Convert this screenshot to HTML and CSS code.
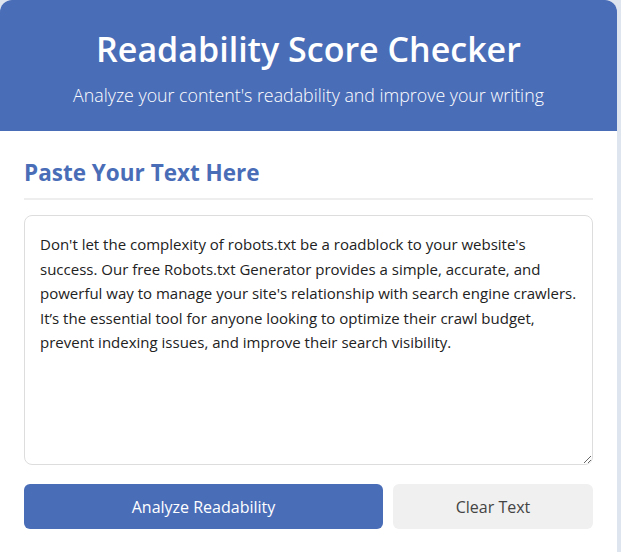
FILE: index.html
```html
<!DOCTYPE html>
<html lang="en">
<head>
<meta charset="utf-8">
<title>Readability Score Checker</title>
<link rel="stylesheet" href="styles.css">
</head>
<body>
<div class="card">
  <header class="hero">
    <h1 class="hero-title">Readability Score Checker</h1>
    <p class="hero-sub">Analyze your content's readability and improve your writing</p>
  </header>
  <section class="input-section">
    <h2 class="section-title">Paste Your Text Here</h2>
    <textarea class="text-input">Don't let the complexity of robots.txt be a roadblock to your website's success. Our free Robots.txt Generator provides a simple, accurate, and powerful way to manage your site's relationship with search engine crawlers. It’s the essential tool for anyone looking to optimize their crawl budget, prevent indexing issues, and improve their search visibility.</textarea>
    <div class="actions">
      <button class="btn btn-primary">Analyze Readability</button>
      <button class="btn btn-secondary">Clear Text</button>
    </div>
  </section>
</div>
</body>
</html>
```

FILE: styles.css
```css
* { box-sizing: border-box; }
html, body { margin: 0; padding: 0; }
body {
  background: #dfe5ef;
  font-family: "Open Sans", "Noto Sans", sans-serif;
}
.card {
  width: 617px;
  min-height: 552px;
  background: #ffffff;
  border-radius: 12px 12px 0 0;
  overflow: hidden;
}
.hero {
  background: #4a6db8;
  color: #ffffff;
  height: 131px;
  padding-top: 26px;
  text-align: center;
}
.hero-title {
  margin: 0;
  font-size: 34px;
  font-weight: 600;
  line-height: 46px;
}
.hero-sub {
  margin: 11px 0 0;
  font-size: 17.8px;
  font-weight: 300;
  line-height: 24px;
}
.input-section {
  padding: 27px 24px 0;
}
.section-title {
  margin: 0;
  color: #4a6db8;
  font-size: 22.5px;
  font-weight: 700;
  line-height: 30px;
  padding-bottom: 10px;
  border-bottom: 2px solid #eeeeee;
}
.text-input {
  display: block;
  width: 100%;
  height: 250px;
  margin-top: 15px;
  padding: 16px 15px;
  border: 1px solid #dddddd;
  border-radius: 8px;
  font-family: "Open Sans", "Noto Sans", sans-serif;
  font-size: 15px;
  line-height: 24.5px;
  color: #222222;
  resize: vertical;
}
.actions {
  display: grid;
  grid-template-columns: 1fr 200px;
  gap: 10px;
  margin-top: 19px;
}
.btn {
  height: 45px;
  border: none;
  border-radius: 6px;
  font-family: "Open Sans", "Noto Sans", sans-serif;
  font-size: 16px;
  font-weight: 500;
}
.btn-primary { background: #4a6db8; color: #ffffff; }
.btn-secondary { background: #f0f0f0; color: #444444; }
```
